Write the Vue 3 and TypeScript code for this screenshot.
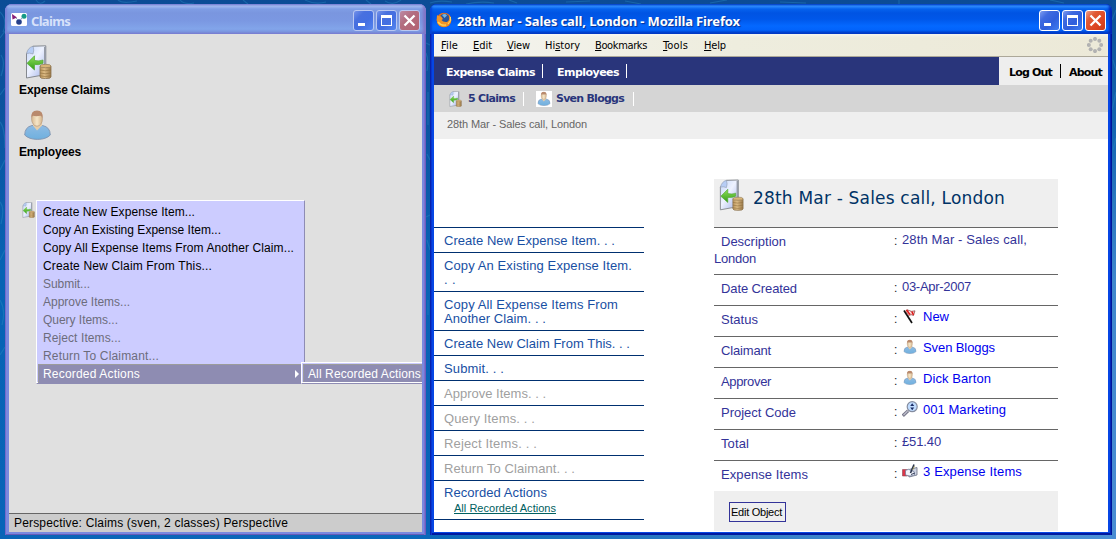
<script setup lang="ts">
import type { Directive } from 'vue'

// Spreads the letters of a label so that its ink ends one pixel short of the given width.
const vFit: Directive<HTMLElement, number> = (el, { value }) => {
  el.style.letterSpacing = '0px'
  const natural = el.getBoundingClientRect().width
  const count = (el.textContent ?? '').trim().length
  if (count > 1) el.style.letterSpacing = `${((value - 1 - natural) / count).toFixed(3)}px`
}

interface Label { text: string; w: number }
interface Action { lines: Label[]; off?: boolean }
interface Field { label: Label; value: Label; icon?: string; box?: string; wrap?: Label }

const popup: (Label & { off?: boolean })[] = [
  { text: 'Create New Expense Item...', w: 153 },
  { text: 'Copy An Existing Expense Item...', w: 179 },
  { text: 'Copy All Expense Items From Another Claim...', w: 252 },
  { text: 'Create New Claim From This...', w: 170 },
  { text: 'Submit...', w: 48, off: true },
  { text: 'Approve Items...', w: 88, off: true },
  { text: 'Query Items...', w: 76, off: true },
  { text: 'Reject Items...', w: 79, off: true },
  { text: 'Return To Claimant...', w: 117, off: true },
]

const menus = [
  { key: '', hot: 'F', rest: 'ile', w: 17, slot: 32 },
  { key: '', hot: 'E', rest: 'dit', w: 19, slot: 34 },
  { key: '', hot: 'V', rest: 'iew', w: 23, slot: 38 },
  { key: 'Hi', hot: 's', rest: 'tory', w: 35, slot: 50 },
  { key: '', hot: 'B', rest: 'ookmarks', w: 52, slot: 68 },
  { key: '', hot: 'T', rest: 'ools', w: 25, slot: 41 },
  { key: '', hot: 'H', rest: 'elp', w: 22, slot: 36 },
]

const actions: Action[] = [
  { lines: [{ text: 'Create New Expense Item. . .', w: 172 }] },
  { lines: [{ text: 'Copy An Existing Expense Item.', w: 189 }, { text: '. .', w: 13 }] },
  { lines: [{ text: 'Copy All Expense Items From', w: 175 }, { text: 'Another Claim. . .', w: 103 }] },
  { lines: [{ text: 'Create New Claim From This. . .', w: 187 }] },
  { lines: [{ text: 'Submit. . .', w: 61 }] },
  { lines: [{ text: 'Approve Items. . .', w: 103 }], off: true },
  { lines: [{ text: 'Query Items. . .', w: 92 }], off: true },
  { lines: [{ text: 'Reject Items. . .', w: 94 }], off: true },
  { lines: [{ text: 'Return To Claimant. . .', w: 132 }], off: true },
]

const fields: Field[] = [
  { label: { text: 'Description', w: 66 }, value: { text: '28th Mar - Sales call,', w: 126 }, wrap: { text: 'London', w: 43 } },
  { label: { text: 'Date Created', w: 77 }, value: { text: '03-Apr-2007', w: 70 } },
  { label: { text: 'Status', w: 38 }, value: { text: 'New', w: 27 }, icon: 'flag', box: '0 0 16 16' },
  { label: { text: 'Claimant', w: 51 }, value: { text: 'Sven Bloggs', w: 73 }, icon: 'person', box: '-3 -1 33 33' },
  { label: { text: 'Approver', w: 51 }, value: { text: 'Dick Barton', w: 69 }, icon: 'person', box: '-3 -1 33 33' },
  { label: { text: 'Project Code', w: 76 }, value: { text: '001 Marketing', w: 84 }, icon: 'lens', box: '0 0 16 16' },
  { label: { text: 'Total', w: 29 }, value: { text: '£51.40', w: 40 } },
  { label: { text: 'Expense Items', w: 88 }, value: { text: '3 Expense Items', w: 100 }, icon: 'cheque', box: '0 0 16 16' },
]

const dots = Array.from({ length: 8 }, (_, i) => ({
  x: 8 + 6.1 * Math.cos((i * Math.PI) / 4),
  y: 8 + 6.1 * Math.sin((i * Math.PI) / 4),
}))
</script>

<template>
  <div class="desktop">
    <svg class="defs" width="0" height="0" aria-hidden="true">
      <defs>
        <linearGradient id="paper" x1="0" y1="0" x2="1" y2="1">
          <stop offset="0" stop-color="#c3d6fa" /><stop offset=".45" stop-color="#eef2ff" /><stop offset="1" stop-color="#9dafe8" />
        </linearGradient>
        <linearGradient id="leaf" x1="0" y1="0" x2="0" y2="1">
          <stop offset="0" stop-color="#8fe05a" /><stop offset="1" stop-color="#329c18" />
        </linearGradient>
        <linearGradient id="wood" x1="0" y1="0" x2="1" y2="0">
          <stop offset="0" stop-color="#b9935a" /><stop offset=".4" stop-color="#dcbb84" /><stop offset="1" stop-color="#9c7a4a" />
        </linearGradient>
        <linearGradient id="shirt" x1="0" y1="0" x2="0" y2="1">
          <stop offset="0" stop-color="#8dbbe4" /><stop offset="1" stop-color="#6fb0de" />
        </linearGradient>
        <linearGradient id="skin" x1="0" y1="0" x2="1" y2="0">
          <stop offset="0" stop-color="#d9ba92" /><stop offset=".5" stop-color="#f6e6c8" /><stop offset="1" stop-color="#d5b48b" />
        </linearGradient>
        <symbol id="claim" viewBox="0 0 27 34">
          <path d="M1.500 8.500L8 1.200L20.800 .8V29.500L1.500 33Z" fill="url(#paper)" stroke="#85898f" />
          <path d="M1.500 8.500Q3 2.500 8 1.200Q9.500 5 8 9Q4.500 7.500 1.500 8.500Z" fill="#b7cdf5" stroke="#8d96a8" stroke-width=".6" />
          <path d="M20 2V20" stroke="#969ca8" stroke-width="2" />
          <path d="M2 18.300L9.500 10.800V15.500Q14 16.500 18 15V18.300Q14 20.200 9.500 19.600V25Z" fill="url(#leaf)" stroke="#51a631" stroke-width=".7" />
          <path d="M15 21V32Q15 33.600 20.500 33.600Q26 33.600 26 32V21Z" fill="url(#wood)" stroke="#8b7453" stroke-width=".8" />
          <ellipse cx="20.500" cy="21" rx="5.500" ry="1.700" fill="#d9b578" stroke="#927c57" stroke-width=".7" />
          <path d="M15 25Q20 26.500 26 25M15 28Q20 29.500 26 28M15 30.800Q20 32.300 26 30.800" fill="none" stroke="#8f6f3d" stroke-width=".6" />
        </symbol>
        <symbol id="person" viewBox="0 0 27 30">
          <path d="M.7 25Q.8 17 8 15.500H18.500Q26.200 17 26.300 25Q22 29.400 13.500 29.400T.7 25Z" fill="url(#shirt)" stroke="#7f93b0" stroke-width=".9" />
          <path d="M9 15.500L13 20.500L18 15.500V12H9Z" fill="#e6cda9" />
          <ellipse cx="13" cy="9" rx="5.400" ry="7.200" fill="url(#skin)" stroke="#b59a7f" stroke-width=".7" />
          <path d="M7.400 8.500Q6.400 .7 13 .6Q19.600 .7 18.600 8.500Q18 6 16.500 5.800Q12 6.500 9 5.800Q7.700 6.500 7.400 8.500Z" fill="#b98a6d" />
        </symbol>
        <symbol id="flag" viewBox="0 0 16 16">
          <path d="M2 2.500L10 15" stroke="#111" stroke-width="1.700" />
          <path d="M3.500 3Q5 .7 7 2.500Q9 4 13 2.800L11.500 7.500Q9.500 6 6.500 7.500Z" fill="#f3b4b2" stroke="#742b2b" stroke-width=".6" />
          <path d="M4.500 1.800L8 6.500M9.800 3.500L11.500 7" stroke="#e01414" stroke-width="1.400" />
          <path d="M7.200 3.200L9 5.500" stroke="#fff" stroke-width="1" />
        </symbol>
        <symbol id="lens" viewBox="0 0 16 16">
          <path d="M.8 14.800L6 9.800" stroke="#77778a" stroke-width="3.200" />
          <path d="M1.500 14.200L5.500 10.200" stroke="#c5c5d2" stroke-width="1.200" />
          <circle cx="10.200" cy="5.700" r="5" fill="#c0dcff" stroke="#858da0" stroke-width="1.200" />
          <path d="M10.200 2.200L12.200 5H8.200ZM10.200 9.200L12.200 6.500H8.200Z" fill="#1b2e68" />
        </symbol>
        <symbol id="cheque" viewBox="0 0 16 16">
          <path d="M5 7L15 4.500V12L7 14Z" fill="#cdd3e2" stroke="#686d82" stroke-width=".8" />
          <path d="M.5 6.500H5.500V13H.5Z" fill="#dc3548" stroke="#8d4351" stroke-width=".6" />
          <path d="M3.500 7.500Q7 5 9 7.500L12 8.500L12.500 12Q8 14 3.500 12Z" fill="#f2f4fb" stroke="#687693" stroke-width=".7" />
          <path d="M8.500 10L12 1.500" stroke="#28334b" stroke-width="1.600" /><path d="M10.500 7L12.500 3" stroke="#a89e54" stroke-width=".8" />
          <path d="M9 11.500L13 10" stroke="#39435f" />
        </symbol>
      </defs>
    </svg>

    <svg class="wallpaper" viewBox="0 0 1116 539" aria-hidden="true">
      <g fill="none" stroke="#2b8bc4" stroke-width="1.200" opacity=".4">
        <path d="M0 12Q8 20 3 32M0 38L6 30M1 55Q6 62 1 76M0 95L5 88M0 122Q5 128 5 148M0 170L5 160M0 202Q5 208 1 224M0 260L5 250M0 300Q6 310 2 325M0 355L5 347" />
        <path d="M36 0Q40 6 45 1M118 0Q122 4 137 1M180 0Q184 5 194 3M243 0L248 4M305 0Q315 5 326 2M366 0L371 4M385 1Q393 6 401 0M430 3Q438 0 452 2M466 4Q480 1 494 3M509 0L517 3M566 2L590 1M625 1L641 4M710 3L727 0M780 2L806 3M899 0V4M1050 0L1064 3" />
        <path d="M426 43L430 45M426 53Q429 60 427 71M428 92V125M427 154L430 160M426 217L430 215M427 240L430 250M428 300V315M1112 20L1116 10M1113 60L1116 70M1112 110L1116 92M1113 150L1116 138M1113 210L1116 190" />
      </g>
    </svg>

    <section class="window idle">
      <header class="titlebar">
        <svg class="logo" viewBox="0 0 16 13">
          <rect width="16" height="13" rx="1.500" fill="#fff" />
          <path d="M1 1L6 4.500L1.500 6.500Z" fill="#861e78" /><circle cx="13" cy="3.300" r="2.500" fill="#159a87" />
          <circle cx="8" cy="9" r="2.800" fill="#26408a" /><path d="M5 5L7 7M11 4.500L9.500 7" stroke="#8a9ac0" />
        </svg>
        <h1><span v-fit="40">Claims</span></h1>
        <span class="buttons">
          <i class="tb"><svg viewBox="0 0 19 19"><path d="M4 12h7v3H4z" fill="#fff" /></svg></i>
          <i class="tb"><svg viewBox="0 0 19 19"><path d="M4 4h11v11H4zM5 7v7h9V7z" fill="#fff" fill-rule="evenodd" /></svg></i>
          <i class="tb close"><svg viewBox="0 0 19 19"><path d="M4.500 4.500L14.500 14.500M14.500 4.500L4.500 14.500" stroke="#fff" stroke-width="2.300" /></svg></i>
        </span>
      </header>
      <div class="body classes">
        <div class="entry">
          <svg class="big-claim"><use href="#claim" /></svg>
          <b><span v-fit="92">Expense Claims</span></b>
        </div>
        <div class="entry second">
          <svg class="big-person"><use href="#person" /></svg>
          <b><span v-fit="63">Employees</span></b>
        </div>
        <svg class="mini-claim"><use href="#claim" /></svg>
        <div class="popup">
          <div v-for="p in popup" :key="p.text" class="pitem" :class="{ off: p.off }"><span v-fit="p.w">{{ p.text }}</span></div>
          <div class="pitem chosen"><span v-fit="98">Recorded Actions</span><i class="arrow"></i></div>
          <div class="submenu"><div class="pitem"><span v-fit="114">All Recorded Actions</span></div></div>
        </div>
        <footer class="status"><span v-fit="275">Perspective: Claims (sven, 2 classes) Perspective</span></footer>
      </div>
    </section>

    <section class="window active">
      <header class="titlebar">
        <svg class="fox" viewBox="0 0 16 16">
          <circle cx="8" cy="8" r="7.300" fill="#e8701a" /><circle cx="8.500" cy="6.800" r="5" fill="#28549c" />
          <path d="M6 3Q9 1 11 3.500L8.500 6Z" fill="#70b5e6" />
          <path d="M1 3Q2.500 4.500 5 4.200L7 7L5.500 8Q7 10.500 11 10Q14 8.500 13 3Q16 6 15 10Q12 15.500 7 15Q1 13.500 .7 8Z" fill="#f19429" />
          <path d="M2 10Q5 14 10 13" fill="none" stroke="#ffd45a" stroke-width="1.300" /><path d="M14.500 5Q15.500 9 12 12" stroke="#ffdf68" fill="none" />
        </svg>
        <h1><span v-fit="284">28th Mar - Sales call, London - Mozilla Firefox</span></h1>
        <span class="buttons">
          <i class="tb"><svg viewBox="0 0 19 19"><path d="M4 12h7v3H4z" fill="#fff" /></svg></i>
          <i class="tb"><svg viewBox="0 0 19 19"><path d="M4 4h11v11H4zM5 7v7h9V7z" fill="#fff" fill-rule="evenodd" /></svg></i>
          <i class="tb close"><svg viewBox="0 0 19 19"><path d="M4.500 4.500L14.500 14.500M14.500 4.500L4.500 14.500" stroke="#fff" stroke-width="2.300" /></svg></i>
        </span>
      </header>
      <div class="body">
        <nav class="menubar">
          <div v-for="m in menus" :key="m.hot + m.rest" :style="{ width: m.slot + 'px' }"><span v-fit="m.w + 1">{{ m.key }}<u>{{ m.hot }}</u>{{ m.rest }}</span></div>
          <svg class="throbber" viewBox="0 0 16 16"><circle v-for="(d, i) in dots" :key="i" :cx="d.x" :cy="d.y" r="2" fill="#b2b2b2" /></svg>
        </nav>
        <nav class="primary">
          <a><span v-fit="90">Expense Claims</span></a><i class="bar"></i>
          <a class="next"><span v-fit="63">Employees</span></a><i class="bar"></i>
          <div class="account"><a><span v-fit="44">Log Out</span></a><i class="bar dark"></i><a><span v-fit="34">About</span></a></div>
        </nav>
        <nav class="secondary">
          <svg class="s-claim"><use href="#claim" /></svg><a><span v-fit="48">5 Claims</span></a><i class="bar"></i>
          <svg class="s-person" viewBox="-3 -1 33 33"><use href="#person" width="27" height="30" /></svg><a><span v-fit="69">Sven Bloggs</span></a><i class="bar wide"></i>
        </nav>
        <div class="crumb"><span v-fit="141">28th Mar - Sales call, London</span></div>
        <main class="page">
          <ul class="actions">
            <li v-for="a in actions" :key="a.lines[0].text" :class="{ off: a.off }">
              <div v-for="l in a.lines" :key="l.text"><span v-fit="l.w">{{ l.text }}</span></div>
            </li>
            <li class="last">
              <div><span v-fit="104">Recorded Actions</span></div>
              <a><span v-fit="103">All Recorded Actions</span></a>
            </li>
          </ul>
          <article class="object">
            <h2><svg><use href="#claim" /></svg><span v-fit="253">28th Mar - Sales call, London</span></h2>
            <div v-for="f in fields" :key="f.label.text" class="field" :class="{ tall: f.wrap, linked: f.icon }">
              <div class="label"><span v-fit="f.label.w">{{ f.label.text }}</span></div>
              <div class="colon">:</div>
              <div class="value">
                <svg v-if="f.icon" :viewBox="f.box"><use :href="'#' + f.icon" :width="f.icon === 'person' ? 27 : 16" :height="f.icon === 'person' ? 30 : 16" /></svg>
                <span v-fit="f.value.w">{{ f.value.text }}</span>
              </div>
              <div v-if="f.wrap" class="wrap"><span v-fit="f.wrap.w">{{ f.wrap.text }}</span></div>
            </div>
            <div class="tools"><button type="button"><span v-fit="52">Edit Object</span></button></div>
          </article>
        </main>
      </div>
    </section>
  </div>
</template>

<style>
html, body { margin: 0; overflow: hidden; }
</style>

<style scoped>
* { box-sizing: border-box; }
.desktop {
  position: relative; display: flex; gap: 4px; width: 1116px; height: 539px; padding: 4px 4px 4px 5px;
  font-family: "Liberation Sans", Arial, sans-serif; font-size: 12px; white-space: nowrap; overflow: hidden;
  background:
    linear-gradient(180deg, #0c5098 0, #1565b2 130px, #4087cc 280px, #4a8dd3 539px) 1112px 0 / 4px 539px no-repeat,
    linear-gradient(90deg, #0a64b6 0, #0b68ba 430px, #2374c0 620px, #468bd0 900px, #4a90d6 1112px) 0 534px / 1116px 5px no-repeat,
    linear-gradient(180deg, #0c4c96 0, #0b539f 110px, #0763b4 270px, #0864b8 539px);
}
.defs { position: absolute; }
.wallpaper { position: absolute; left: 0; top: 0; width: 1116px; height: 539px; }
i { font-style: normal; }
h1, h2, ul { margin: 0; padding: 0; }

.window { position: relative; height: 531px; border-radius: 7px 7px 0 0; overflow: hidden; display: flex; flex-direction: column; }
.idle { width: 421px; padding: 0 4px 3px; background: #7a89df; box-shadow: inset 1px 0 #7569ca, inset -1px 0 #6e5dbd, inset -2px 0 #7c70cf, inset 0 -1px #675bb8; }
.active { width: 682px; padding: 0 4px 3px; background: #0646e5; box-shadow: inset 1px 0 #0722ae, inset 2px 0 #0835cf, inset -1px 0 #00149a, inset -2px 0 #0227b8, inset 0 -2px #0019a0; }
.titlebar { display: flex; flex: none; height: 30px; margin: 0 -4px; padding: 6px 6px 0; }
.idle .titlebar { background: linear-gradient(180deg, #7589dd 0, #a4bbf0 2px, #7f9de5 5px, #7a96df 9px, #7b98e2 17px, #82a5ea 25px, #7a95df 28px, #7382d4 30px); box-shadow: inset 2px 0 2px #7a80d8, inset -3px 0 3px #8173c6; }
.active .titlebar { background: linear-gradient(180deg, #0657cf 0, #3190ff 2px, #0562ee 5px, #0054e3 9px, #0057e9 15px, #0468ff 22px, #0263fb 26px, #0048d5 28px, #003dc4 30px); box-shadow: inset 2px 0 2px #0644d5, inset -3px 0 3px #0424b4; }
.logo { width: 16px; height: 13px; margin: 3px 4px 0 0; }
.fox { width: 16px; height: 16px; margin: 2px 5px 0 0; }
h1 { font: bold 13px/22px "Noto Sans", "Open Sans", sans-serif; color: #fff; text-shadow: 1px 1px 1px #0a2f90; flex: 1; }
.idle h1 { color: #d7e2fa; text-shadow: none; }
.buttons { display: flex; gap: 2px; }
.tb { width: 21px; height: 21px; border: 1px solid #fff; border-radius: 3px; background: linear-gradient(135deg, #7f9df0 0, #3f6ae0 28%, #2f5edc 60%, #3f7df0 100%); }
.tb svg { display: block; width: 19px; height: 19px; }
.close { background: linear-gradient(135deg, #f0a08a 0, #e05a35 30%, #dc4420 70%, #c83a18 100%); }
.idle .tb { border-color: #b9c8f2; }
.idle .tb:not(.close) { background: linear-gradient(135deg, #7593ea 0, #4870df 30%, #446fe2 60%, #5485ef 100%); }
.idle .close { background: linear-gradient(135deg, #bd8ba5 0, #b26d80 40%, #b46271 100%); }

.body { flex: 1; display: flex; flex-direction: column; background: #fff; min-height: 0; position: relative; overflow: hidden; }
.classes { background: #e0e0e0; padding: 11px 0 0 10px; }
.entry { display: flex; flex-direction: column; height: 65px; }
.entry b { line-height: 16px; }
.entry.second { margin-top: 0; }
.big-claim { width: 27px; height: 34px; margin: 0 0 3px 6px; }
.big-person { width: 27px; height: 30px; margin: 0 0 4px 5px; }
.mini-claim { position: absolute; left: 13px; top: 168px; width: 13px; height: 16px; }
.popup { position: absolute; left: 27px; top: 166px; width: 269px; height: 184px; padding: 2px 0 0 1px; background: #ccccff; border: 1px solid; border-color: #fff #8e8cb4 #8e8cb4 #fff; box-shadow: inset 0 -1px #fff; }
.pitem { height: 18px; line-height: 18px; padding-left: 5px; color: #000; }
.off { color: #6c6c7c; }
.chosen { margin-top: -1px; height: 19px; line-height: 18px; background: #8e8cb2; color: #fff; border-top: 1px solid #9b9b9b; border-left: 1px solid #9b9b9b; padding: 0 0 0 4px; position: relative; }
.arrow { position: absolute; right: 5px; top: 5px; border-left: 4px solid #fff; border-top: 4px solid transparent; border-bottom: 4px solid transparent; }
.submenu { position: absolute; left: 264px; top: 161px; width: 140px; height: 22px; border-top: 1px solid #fff; border-left: 1px solid #fff; border-bottom: 1px solid #8e8cb4; background: #ccccff; padding: 1px 0 1px 1px; box-shadow: inset 0 -1px #fff; }
.submenu .pitem { height: 18px; line-height: 18px; background: #8e8cb2; border: 1px solid #9b9b9b; border-width: 1px 0 0 1px; color: #fff; padding-left: 4px; }
.status { position: absolute; left: 0; right: 0; bottom: 0; height: 19px; line-height: 19px; padding-left: 5px; background: #cccccc; border-top: 1px solid #666; }

.menubar { display: flex; height: 23px; flex: none; padding-left: 7px; font: 11px/23px "DejaVu Sans Condensed", "DejaVu Sans", sans-serif; background: linear-gradient(90deg, #f4f4f0 0, #eeedde 300px, #ece9d8); border-bottom: 1px solid #aca899; position: relative; box-shadow: inset 0 2px 3px #ffffff80; }
.menubar u { text-underline-offset: 1px; }
.throbber { width: 16px; height: 16px; margin: 3px 5px 0 auto; }
.bar { width: 1px; height: 14px; background: #fff; }
.primary, .secondary { display: flex; align-items: center; flex: none; font: bold 11px/18px "DejaVu Sans", Verdana, sans-serif; }
.primary { height: 28px; background: #29357b; color: #fff; padding-left: 12px; }
.primary a { padding-top: 3px; }
.primary > a + .bar { margin-left: 7px; }
.primary > a.next { margin-left: 14px; }
.account { align-self: stretch; display: flex; align-items: center; width: 109px; margin-left: auto; padding-left: 10px; background: #eeeeee; color: #000; }
.bar.dark { background: #000; margin: 0 8px; }
.secondary { height: 27px; background: #d5d5d5; color: #29357b; padding-left: 15px; }
.s-claim { width: 13px; height: 16px; margin-right: 6px; }
.secondary .bar { margin-left: 8px; }
.secondary .bar.wide { margin-left: 9px; }
.s-person { width: 16px; height: 16px; margin: 0 4px 0 12px; background: #fff; }
.crumb { height: 27px; flex: none; line-height: 25px; font-size: 11px; padding-left: 13px; color: #666; background: #efefef; }

.page { display: flex; align-items: flex-start; font-size: 13px; }
.actions { width: 210px; margin-top: 88px; list-style: none; color: #184fa3; line-height: 14px; border-bottom: 1px solid #003070; }
.actions li { border-top: 1px solid #003070; padding: 6px 0 4px 10px; }
.actions li.off { color: #9f9f9f; }
.actions li.last { height: 39px; padding-top: 5px; }
.actions a { display: block; padding-left: 10px; font-size: 11px; line-height: 17px; color: #006060; text-decoration: underline; }
.object { width: 344px; margin: 40px 0 0 70px; color: #333399; }
h2 { display: flex; height: 48px; background: #efefef; font: 17px/20px "DejaVu Sans", Verdana, sans-serif; color: #003366; padding-left: 5px; }
h2 svg { width: 25px; height: 32px; margin-right: 9px; }
h2 span { margin-top: 9px; align-self: flex-start; }
.field { display: grid; grid-template: 24px 1fr / 180px 8px 1fr; height: 31px; border-top: 1px solid #666; line-height: 16px; align-items: start; }
.tall { height: 47px; }
.label { padding: 6px 0 0 7px; }
.colon { padding-top: 5px; color: #222; font-size: 12px; }
.value { display: flex; padding-top: 4px; }
.linked .value { padding-top: 3px; color: #0000ee; }
.value svg { width: 16px; height: 16px; margin: -1px 5px 0 0; flex: none; }
.wrap { grid-column: 1; margin-top: -1px; }
.tools { height: 40px; background: #efefef; padding: 11px 0 0 15px; }
button { display: block; width: 57px; height: 20px; padding: 0 0 0 1px; border: 1px solid #333399; background: #efefef; font: 11px/18px "Liberation Sans", Arial, sans-serif; text-align: left; color: #000; white-space: nowrap; }
</style>
